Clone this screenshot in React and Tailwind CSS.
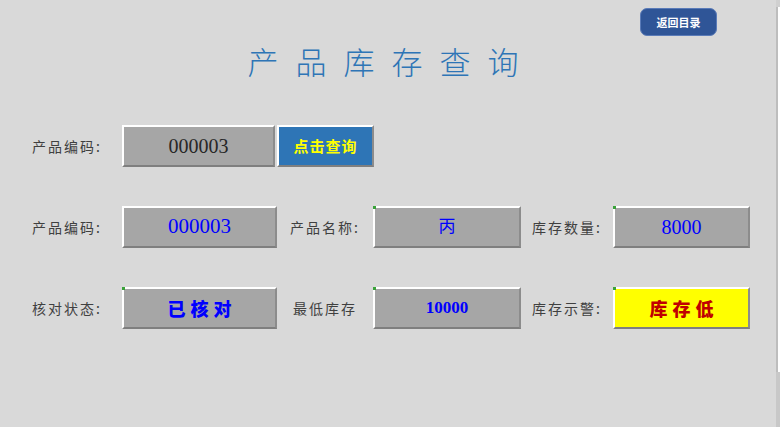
const labelFont = { fontFamily: '"Noto Sans CJK SC", "Noto Sans", sans-serif' }

function Cell({ width, className = '', dot = false, children }) {
  return (
    <div
      className={`relative h-[42px] flex items-center justify-center border-t-2 border-l-2 border-t-white border-l-white border-b-2 border-r-2 border-b-[#7f7f7f] border-r-[#8c8c8c] ${width} ${className}`}
    >
      {dot && <span className="absolute -top-[2px] -left-[2px] w-[3px] h-[3px] bg-[#3aa23a]" />}
      {children}
    </div>
  )
}

function Label({ children, className = '' }) {
  return (
    <span className={`text-[14px] tracking-[2px] text-[#404040] ${className}`} style={labelFont}>
      {children}
    </span>
  )
}

export default function App() {
  const serif = { fontFamily: '"Liberation Serif", "Noto Sans CJK SC", serif' }
  const bold = { fontFamily: '"Noto Sans CJK SC", sans-serif' }

  return (
    <div className="w-[780px] h-[427px] flex bg-[#d9d9d9] overflow-hidden">
      <div className="w-[776px] flex flex-col">
        {/* top bar */}
        <div className="flex justify-end pt-[8px] pr-[59px]">
          <button
            className="w-[77px] h-[28px] rounded-[7px] bg-[#2f5597] border border-[#5a7bb8] text-white text-[11px] font-bold flex items-center justify-center"
            style={bold}
          >
            返回目录
          </button>
        </div>

        {/* title */}
        <h1
          className="mt-[5px] h-[40px] flex items-center justify-center pl-[7px] text-[31px] font-light tracking-[17px] text-[#2e75b6]"
          style={labelFont}
        >
          产品库存查询
        </h1>

        {/* search row */}
        <div className="flex items-center mt-[44px] pl-[32px]">
          <Label className="w-[90px]">产品编码:</Label>
          <Cell width="w-[153px]" className="bg-[#a6a6a6]">
            <span className="text-[20px] text-[#262626]" style={serif}>000003</span>
          </Cell>
          <Cell width="w-[97px] ml-[2px]" className="bg-[#2e75b6] border-t-[#e8eef6] border-l-[#e8eef6]">
            <span className="text-[15px] font-bold text-[#ffff00] tracking-[1px]" style={bold}>点击查询</span>
          </Cell>
        </div>

        {/* result row 1 */}
        <div className="flex items-center mt-[39px] pl-[32px]">
          <Label className="w-[90px]">产品编码:</Label>
          <Cell width="w-[155px]" className="bg-[#a6a6a6]">
            <span className="text-[21px] text-[#0000ff]" style={serif}>000003</span>
          </Cell>
          <Label className="w-[96px] pl-[13px]">产品名称:</Label>
          <Cell width="w-[148px]" className="bg-[#a6a6a6]" dot>
            <span className="text-[17px] text-[#0000ff]" style={serif}>丙</span>
          </Cell>
          <Label className="w-[92px] pl-[11px]">库存数量:</Label>
          <Cell width="w-[137px]" className="bg-[#a6a6a6]" dot>
            <span className="text-[20px] text-[#0000ff]" style={serif}>8000</span>
          </Cell>
        </div>

        {/* result row 2 */}
        <div className="flex items-center mt-[39px] pl-[32px]">
          <Label className="w-[90px]">核对状态:</Label>
          <Cell width="w-[155px]" className="bg-[#a6a6a6]" dot>
            <span className="text-[18px] font-black text-[#0000ff] tracking-[5px] pl-[5px]" style={bold}>已核对</span>
          </Cell>
          <Label className="w-[96px] pl-[16px]">最低库存</Label>
          <Cell width="w-[148px]" className="bg-[#a6a6a6]" dot>
            <span className="text-[17px] font-bold text-[#0000ff]" style={serif}>10000</span>
          </Cell>
          <Label className="w-[92px] pl-[11px]">库存示警:</Label>
          <Cell width="w-[137px]" className="bg-[#ffff00]" dot>
            <span className="text-[18px] font-black text-[#c00000] tracking-[5px] pl-[5px]" style={bold}>库存低</span>
          </Cell>
        </div>
      </div>

      {/* right edge strip */}
      <div className="w-[4px] flex flex-col">
        <div className="h-[7px] bg-[#d0d0d0]" />
        <div className="h-[365px] flex">
          <div className="w-[2px] bg-[#bdbdbd]" />
          <div className="flex-1 bg-white" />
        </div>
        <div className="flex-1 bg-[#c8c8c8]" />
      </div>
    </div>
  )
}
